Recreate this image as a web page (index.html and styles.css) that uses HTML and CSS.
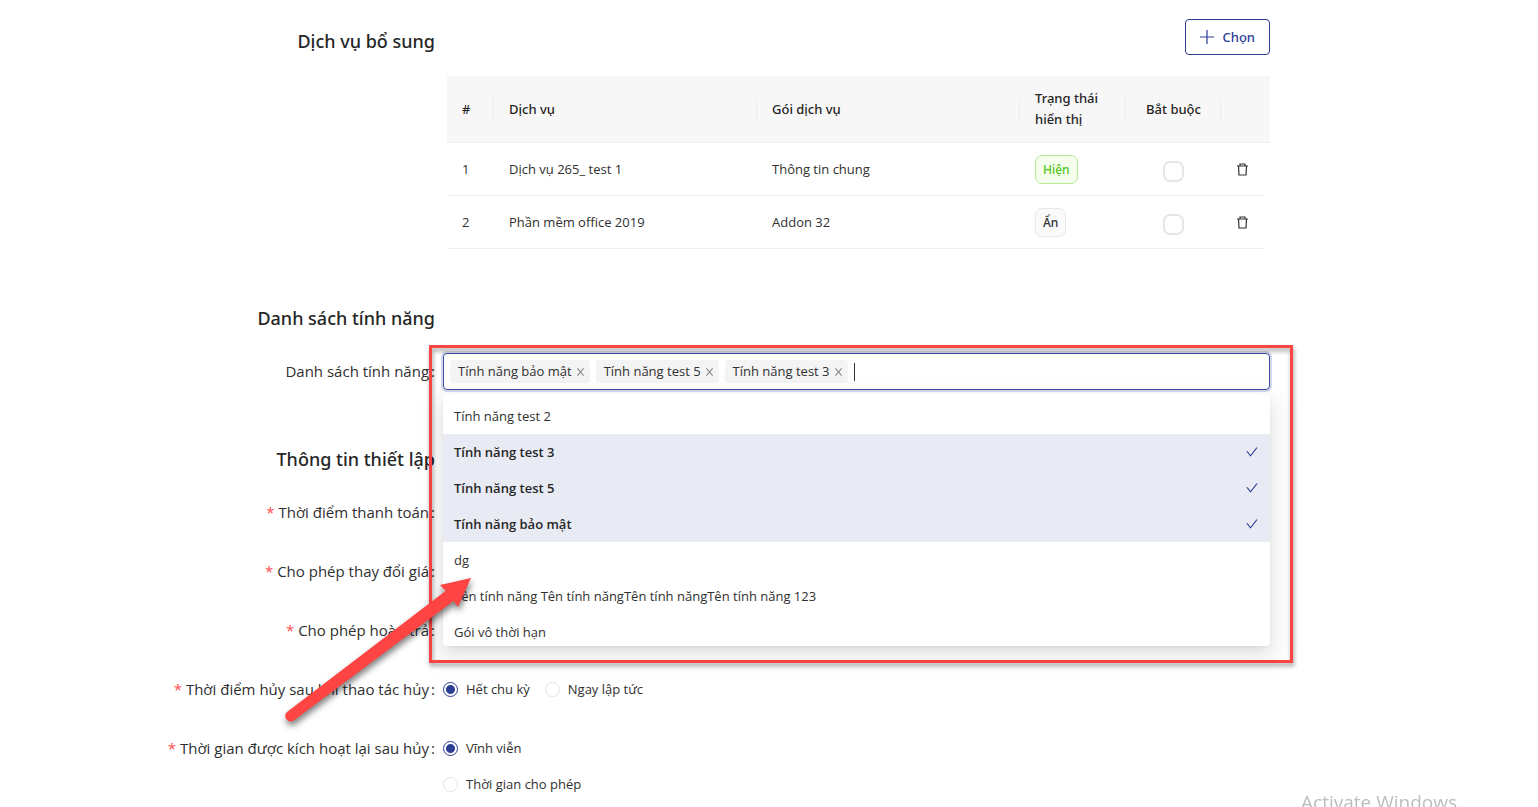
FILE: index.html
```html
<!DOCTYPE html>
<html lang="vi">
<head>
<meta charset="utf-8">
<title>Dịch vụ bổ sung</title>
<link rel="stylesheet" href="styles.css">
</head>
<body>
<svg class="sprite" aria-hidden="true">
  <symbol id="trash" viewBox="0 0 13 13"><path d="M1 3H12M4 3V1H9V3M2.500 3L3 12H10L10.500 3" fill="none" stroke="currentColor" stroke-width="1.200"/></symbol>
  <symbol id="check" viewBox="0 0 1024 1024"><path d="M912 190h-69.900c-9.800 0-19.100 4.500-25.100 12.200L404.700 724.500 207 474a32 32 0 0 0-25.100-12.200H112c-6.700 0-10.400 7.700-6.300 12.900l273.900 347c12.800 16.200 37.400 16.200 50.300 0l488.400-618.900c4.100-5.100.4-12.800-6.300-12.800z"/></symbol>
  <symbol id="close" viewBox="0 0 10 10"><path d="M1.500 1L8.500 9M8.500 1L1.500 9" fill="none" stroke="currentColor" stroke-width="1.200"/></symbol>
</svg>
<main class="form">
  <section class="section">
    <div class="row head">
      <h2 class="title">Dịch vụ bổ sung</h2>
      <button class="choose" type="button"><svg viewBox="0 0 14 14" aria-hidden="true"><path d="M7 0V14M0 7H14"/></svg>Chọn</button>
    </div>
    <div class="row">
      <table class="services">
        <colgroup><col class="c-no"><col><col><col class="c-state"><col class="c-req"><col class="c-del"><col class="c-scroll"></colgroup>
        <thead><tr><th>#</th><th>Dịch vụ</th><th>Gói dịch vụ</th><th>Trạng thái hiển thị</th><th class="center">Bắt buộc</th><th class="last" colspan="2"></th></tr></thead>
        <tbody>
          <tr><td>1</td><td>Dịch vụ 265_ test 1</td><td>Thông tin chung</td><td><span class="state on">Hiện</span></td><td class="center"><input class="tick" type="checkbox" aria-label="Bắt buộc 1"></td><td class="center"><button class="trash" type="button" aria-label="Xóa 1"><svg><use href="#trash"/></svg></button></td></tr>
          <tr><td>2</td><td>Phần mềm office 2019</td><td>Addon 32</td><td><span class="state">Ẩn</span></td><td class="center"><input class="tick" type="checkbox" aria-label="Bắt buộc 2"></td><td class="center"><button class="trash" type="button" aria-label="Xóa 2"><svg><use href="#trash"/></svg></button></td></tr>
        </tbody>
      </table>
    </div>
  </section>

  <section class="section">
    <div class="row head"><h2 class="title">Danh sách tính năng</h2></div>
    <div class="row">
      <label class="label" for="features">Danh sách tính năng<span class="colon">:</span></label>
      <div class="select">
        <div class="box">
          <span class="tag">Tính năng bảo mật<button type="button" aria-label="Bỏ Tính năng bảo mật"><svg><use href="#close"/></svg></button></span>
          <span class="tag">Tính năng test 5<button type="button" aria-label="Bỏ Tính năng test 5"><svg><use href="#close"/></svg></button></span>
          <span class="tag">Tính năng test 3<button type="button" aria-label="Bỏ Tính năng test 3"><svg><use href="#close"/></svg></button></span>
          <span class="caret"></span>
          <input class="search" id="features" type="text">
        </div>
        <ul class="menu" role="listbox" aria-label="Danh sách tính năng">
          <li role="option">Tính năng test 2</li>
          <li role="option" class="picked" aria-selected="true">Tính năng test 3<svg><use href="#check"/></svg></li>
          <li role="option" class="picked" aria-selected="true">Tính năng test 5<svg><use href="#check"/></svg></li>
          <li role="option" class="picked" aria-selected="true">Tính năng bảo mật<svg><use href="#check"/></svg></li>
          <li role="option">dg</li>
          <li role="option">Tên tính năng Tên tính năngTên tính năngTên tính năng 123</li>
          <li role="option">Gói vô thời hạn</li>
        </ul>
        <div class="frame"></div>
        <svg class="arrow" viewBox="0 0 200 160" aria-hidden="true"><path d="M4 137L162.500 16L157 10L188 3L175 32L170.500 26L10 146A5.500 5.500 0 0 1 4 137Z"/></svg>
      </div>
    </div>
  </section>

  <section class="section">
    <div class="row head"><h2 class="title">Thông tin thiết lập</h2></div>
    <div class="row"><span class="label"><i>*</i>Thời điểm thanh toán<span class="colon">:</span></span></div>
    <div class="row"><span class="label"><i>*</i>Cho phép thay đổi giá<span class="colon">:</span></span></div>
    <div class="row"><span class="label"><i>*</i>Cho phép hoàn trả<span class="colon">:</span></span></div>
    <div class="row">
      <span class="label" id="cancel"><i>*</i>Thời điểm hủy sau khi thao tác hủy<span class="colon">:</span></span>
      <div class="radios" role="radiogroup" aria-labelledby="cancel">
        <label><input type="radio" name="cancel" checked>Hết chu kỳ</label>
        <label><input type="radio" name="cancel">Ngay lập tức</label>
      </div>
    </div>
    <div class="row">
      <span class="label" id="again"><i>*</i>Thời gian được kích hoạt lại sau hủy<span class="colon">:</span></span>
      <div class="radios stack" role="radiogroup" aria-labelledby="again">
        <label><input type="radio" name="again" checked>Vĩnh viễn</label>
        <label><input type="radio" name="again">Thời gian cho phép</label>
      </div>
    </div>
  </section>
</main>
<div class="watermark">Activate Windows</div>
</body>
</html>
```
FILE: styles.css
```css
* { box-sizing: border-box; }
html { overflow: hidden; }
body {
  margin: 0;
  background: #fff;
  color: #303030;
  font: 13px/21px "Open Sans", "Noto Sans", sans-serif;
}
button, input { font: inherit; color: inherit; margin: 0; padding: 0; }
button { background: none; border: 0; cursor: pointer; }
svg { fill: currentColor; }
.sprite { position: absolute; width: 0; height: 0; }

.form { padding: 19px 268px 0 135px; }
.section { display: flex; flex-direction: column; gap: 23px; }
.section + .section { margin-top: 47px; }
.row {
  display: grid;
  grid-template-columns: 300px minmax(0, 1fr);
  column-gap: 8px;
  min-height: 36px;
}
.head { margin-bottom: -2px; }
.title, .choose, .services th, .state { font-family: "Noto Sans", "Open Sans", sans-serif; font-weight: 500; }
.title { margin: 0; font-size: 18px; line-height: 44px; height: 36px; color: #262626; text-align: right; white-space: nowrap; }
.label { font-size: 15px; line-height: 36px; height: 36px; text-align: right; white-space: nowrap; }
.label i { color: #ff4d4f; font-style: normal; margin-right: 4px; }
.colon { margin-left: 2px; }

.choose {
  justify-self: end;
  display: flex; align-items: center; gap: 8px;
  height: 36px; padding: 0 14px;
  border: 1px solid #2c3d94; border-radius: 4px;
  color: #2c3d94;
}
.choose svg { width: 14px; height: 14px; stroke: currentColor; stroke-width: 1.2; }

.services {
  grid-column: 2;
  width: calc(100% - 4px); margin-left: 4px;
  table-layout: fixed; border-collapse: separate; border-spacing: 0;
}
.c-no { width: 47px; }
.c-state { width: 106px; }
.c-req { width: 95px; }
.c-del { width: 43px; }
.c-scroll { width: 6px; }
.services th {
  height: 67px; padding: 0 15px; text-align: left;
  border-bottom: 1px solid #f0f0f0; color: #262626;
  background: linear-gradient(#ececec, #ececec) right center / 1px 22px no-repeat #f7f7f7;
}
.services th.last { background: #f7f7f7; }
.services td { height: 53px; padding: 0 15px; border-bottom: 1px solid #f0f0f0; }
.services + .section { margin-top: 0; }
.services .center { text-align: center; padding: 0; }
.state {
  display: inline-block; padding: 3px 7px; border: 1px solid #e8e8e8; border-radius: 7px;
  background: #fafafa; font-size: 12px;
}
.state.on { color: #52c41a; background: #f6ffed; border-color: #b7eb8f; }
.tick {
  appearance: none; display: block; width: 21px; height: 21px; margin: 5px auto 0;
  border: 2px solid #e6e6e6; border-radius: 7px; background: #fff;
}
.trash { display: block; margin: 0 auto; }
.trash svg { display: block; width: 13px; height: 13px; }

.select { position: relative; }
.box {
  display: flex; align-items: center; gap: 6px;
  height: 37px; padding: 0 6px;
  border: 1px solid #3b4ea0; border-radius: 4px;
  box-shadow: 0 0 0 2px rgba(44, 61, 148, .2);
}
.tag {
  display: flex; align-items: center; gap: 4px;
  height: 23px; padding: 0 5px 0 8px;
  border-radius: 4px; background: #f4f4f4; white-space: nowrap;
}
.tag button { display: flex; }
.tag svg { width: 9px; height: 10px; color: #888; }
.caret { width: 1px; height: 18px; background: #333; }
.search { flex: 1; min-width: 0; border: 0; outline: 0; background: none; }

.menu {
  position: absolute; z-index: 2; top: 41px; left: 0; right: 0;
  height: 252px; margin: 0; padding: 4px 0; overflow: hidden; list-style: none;
  background: #fff; border-radius: 4px;
  box-shadow: 0 3px 6px -4px rgba(0, 0, 0, .12), 0 6px 16px rgba(0, 0, 0, .08), 0 9px 28px 8px rgba(0, 0, 0, .05);
}
.menu li {
  display: flex; justify-content: space-between; align-items: center;
  height: 36px; padding: 0 11px; white-space: nowrap;
}
.menu .picked { background: #e8ebf4; color: #262626; font-weight: 600; }
.menu svg { width: 14px; height: 14px; color: #2c3d94; }

.frame {
  position: absolute; z-index: 1; top: -8px; left: -14px; right: -23px; height: 318px;
  border: 3px solid #ff4444; pointer-events: none;
  filter: drop-shadow(1px 3px 2px rgba(0, 0, 0, .4));
}
.arrow {
  position: absolute; z-index: 3; left: -160px; top: 222px; width: 200px; height: 160px;
  color: #ff4444; overflow: visible; pointer-events: none;
  filter: drop-shadow(1px 4px 3px rgba(0, 0, 0, .5));
}

.radios { display: flex; gap: 15px; }
.radios.stack { flex-direction: column; gap: 0; }
.radios label { display: flex; align-items: center; gap: 8px; height: 36px; white-space: nowrap; }
.radios input {
  appearance: none; width: 15px; height: 15px; border: 1px solid #e3e3e3; border-radius: 50%;
}
.radios input:checked {
  border-color: #2c3d94;
  background: radial-gradient(circle, #2c3d94 4px, transparent 5px);
}
.watermark { position: fixed; right: 81px; bottom: -8px; font-size: 19px; line-height: 26px; color: #bdbdbd; }
```
